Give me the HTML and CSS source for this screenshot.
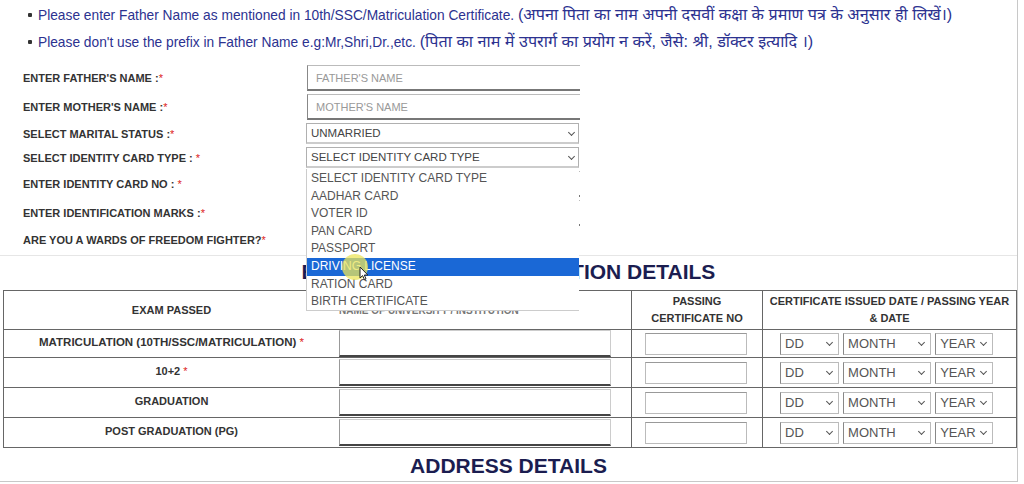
FILE: index.html
```html
<!DOCTYPE html>
<html lang="en">
<head>
  <meta charset="UTF-8">
  <title>Personal Details</title>
  <link rel="stylesheet" href="styles.css">
</head>
<body>
  <div class="page">
    <ul class="notes">
      <li><span>Please enter Father Name as mentioned in 10th/SSC/Matriculation Certificate. <span class="hi">(अपना पिता का नाम अपनी दसवीं कक्षा के प्रमाण पत्र के अनुसार ही लिखें।)</span></span></li>
      <li><span>Please don't use the prefix in Father Name e.g:Mr,Shri,Dr.,etc. <span class="hi">(पिता का नाम में उपरार्ग का प्रयोग न करें, जैसे: श्री, डॉक्टर इत्यादि ।)</span></span></li>
    </ul>

    <div class="form">
      <label class="lbl">ENTER FATHER'S NAME :<span class="req">*</span></label>
      <input class="txt" type="text" placeholder="FATHER'S NAME">

      <label class="lbl">ENTER MOTHER'S NAME :<span class="req">*</span></label>
      <input class="txt" type="text" placeholder="MOTHER'S NAME">

      <label class="lbl">SELECT MARITAL STATUS :<span class="req">*</span></label>
      <span class="sel wide"><select><option>UNMARRIED</option></select></span>

      <label class="lbl">SELECT IDENTITY CARD TYPE : <span class="req">*</span></label>
      <span class="sel wide"><select><option>SELECT IDENTITY CARD TYPE</option></select></span>

      <label class="lbl">ENTER IDENTITY CARD NO : <span class="req">*</span></label>
      <input class="txt" type="text" placeholder="IDENTITY CARD NO">

      <label class="lbl">ENTER IDENTIFICATION MARKS :<span class="req">*</span></label>
      <input class="txt" type="text" placeholder="IDENTIFICATION MARKS">

      <label class="lbl">ARE YOU A WARDS OF FREEDOM FIGHTER?<span class="req">*</span></label>
      <span class="sel wide"><select><option>NO</option></select></span>
    </div>

    <div class="dropdown">
      <div class="opt">SELECT IDENTITY CARD TYPE</div>
      <div class="opt">AADHAR CARD</div>
      <div class="opt">VOTER ID</div>
      <div class="opt">PAN CARD</div>
      <div class="opt">PASSPORT</div>
      <div class="opt active">DRIVING LICENSE</div>
      <div class="opt">RATION CARD</div>
      <div class="opt">BIRTH CERTIFICATE</div>
    </div>

    <div class="cursor">
      <span class="halo"></span>
      <svg class="arrow" width="10" height="15" viewBox="0 0 10 15">
        <path d="M1 1 L1 12 L3.6 9.6 L5.4 13.6 L7 12.9 L5.3 9 L8.8 9 Z" fill="#fff" stroke="#222" stroke-width="1"/>
      </svg>
    </div>

    <h2 class="section edu-title">EDUCATIONAL QUALIFICATION DETAILS</h2>

    <table class="edu">
      <tr class="head">
        <th class="c1">EXAM PASSED</th>
        <th class="c2">NAME OF UNIVERSITY / INSTITUTION</th>
        <th class="c3">PASSING<br>CERTIFICATE NO</th>
        <th class="c4">CERTIFICATE ISSUED DATE / PASSING YEAR<br>&amp; DATE</th>
      </tr>
      <tr class="first">
        <td class="c1">MATRICULATION (10TH/SSC/MATRICULATION) <span class="req">*</span></td>
        <td class="c2"><input class="uni" type="text"></td>
        <td class="c3"><input class="cert" type="text"></td>
        <td class="c4">
          <span class="sel dd"><select><option>DD</option></select></span>
          <span class="sel mm"><select><option>MONTH</option></select></span>
          <span class="sel yy"><select><option>YEAR</option></select></span>
        </td>
      </tr>
      <tr>
        <td class="c1">10+2 <span class="req">*</span></td>
        <td class="c2"><input class="uni" type="text"></td>
        <td class="c3"><input class="cert" type="text"></td>
        <td class="c4">
          <span class="sel dd"><select><option>DD</option></select></span>
          <span class="sel mm"><select><option>MONTH</option></select></span>
          <span class="sel yy"><select><option>YEAR</option></select></span>
        </td>
      </tr>
      <tr>
        <td class="c1">GRADUATION</td>
        <td class="c2"><input class="uni" type="text"></td>
        <td class="c3"><input class="cert" type="text"></td>
        <td class="c4">
          <span class="sel dd"><select><option>DD</option></select></span>
          <span class="sel mm"><select><option>MONTH</option></select></span>
          <span class="sel yy"><select><option>YEAR</option></select></span>
        </td>
      </tr>
      <tr>
        <td class="c1">POST GRADUATION (PG)</td>
        <td class="c2"><input class="uni" type="text"></td>
        <td class="c3"><input class="cert" type="text"></td>
        <td class="c4">
          <span class="sel dd"><select><option>DD</option></select></span>
          <span class="sel mm"><select><option>MONTH</option></select></span>
          <span class="sel yy"><select><option>YEAR</option></select></span>
        </td>
      </tr>
    </table>

    <h2 class="section address">ADDRESS DETAILS</h2>
  </div>
</body>
</html>
```

FILE: styles.css
```css
body {
  margin: 0;
  background: #fff;
  font-family: "Liberation Sans", Arial, "Noto Sans Devanagari", sans-serif;
  color: #333;
}
.page {
  position: relative;
  width: 1017px;
  height: 481px;
  border-right: 1px solid #c8c8c8;
  border-bottom: 1px solid #c8c8c8;
  overflow: hidden;
}

/* notes */
.notes {
  list-style: none;
  margin: 0;
  padding: 5px 0 0 28px;
  color: #2c3290;
  font-size: 13.75px;
  line-height: 18px;
}
.notes li {
  display: flex;
  gap: 6px;
  height: 18px;
  margin-bottom: 9px;
  white-space: nowrap;
}
.notes li::before {
  content: "";
  width: 4px;
  height: 4px;
  margin-top: 8px;
  background: #333;
  border-radius: 1px;
  flex: none;
}
.notes .hi {
  font-size: 16.2px;
  line-height: 18px;
}

/* personal form */
.form {
  display: grid;
  grid-template-columns: 284px 273px;
  row-gap: 3px;
  align-items: center;
  margin: 15px 0 0 23px;
}
.lbl {
  font-size: 11px;
  font-weight: bold;
  color: #333;
}
.req {
  color: #d22;
  font-weight: normal;
}
.txt {
  box-sizing: border-box;
  height: 26px;
  width: 273px;
  margin: 0;
  padding: 0 8px;
  border: 1px solid #bbb;
  border-left-color: #888;
  border-bottom: 2px solid #777;
  border-right: none;
  font: 11px "Liberation Sans", Arial, sans-serif;
  color: #333;
}
.txt::placeholder {
  color: #999;
}
.sel {
  position: relative;
  display: inline-block;
}
.sel select {
  appearance: none;
  -webkit-appearance: none;
  box-sizing: border-box;
  width: 100%;
  height: 100%;
  margin: 0;
  padding: 0 0 0 4px;
  border: 1px solid #aaa;
  border-radius: 0;
  background: #fff;
  font: 12px "Liberation Sans", Arial, sans-serif;
  color: #444;
}
.sel::after {
  content: "";
  position: absolute;
  right: 8px;
  top: 50%;
  width: 4px;
  height: 4px;
  margin-top: -4px;
  border-right: 1px solid #555;
  border-bottom: 1px solid #555;
  transform: rotate(45deg);
  pointer-events: none;
}
.sel.wide {
  width: 273px;
  height: 21px;
  margin-left: -1px;
}
.sel.wide::after {
  right: 5px;
}
.sel.wide select {
  font-size: 11.5px;
  border-color: #b0b0b0;
  border-bottom: 2px solid #ccc;
}

/* open list of the identity card select */
.dropdown {
  position: absolute;
  left: 306px;
  top: 169px;
  width: 272px;
  height: 141px;
  background: #fff;
  border-left: 1px solid #ccc;
  border-bottom: 1px solid #ccc;
  z-index: 2;
}
.opt {
  height: 17.6px;
  line-height: 17.6px;
  padding-left: 4px;
  font-size: 12px;
  color: #555;
}
.opt:first-child {
  margin-top: 1px;
}
.opt.active {
  background: #1a68d6;
  color: #fff;
}
.cursor {
  position: absolute;
  left: 342px;
  top: 254px;
  width: 26px;
  height: 26px;
  z-index: 3;
}
.halo {
  position: absolute;
  inset: 0;
  border-radius: 50%;
  background: rgba(235, 228, 90, 0.75);
}
.arrow {
  position: absolute;
  left: 17px;
  top: 12px;
}

/* sections */
.section {
  margin: 0;
  text-align: center;
  font-size: 21px;
  line-height: 24px;
  color: #1b1d50;
}
.edu-title {
  border-top: 1px solid #e6e6e6;
  margin-top: 5px;
  padding-top: 4px;
}
.address {
  margin-top: 6px;
}

/* education table */
.edu {
  margin: 6px 0 0 3px;
  width: 1010px;
  border-collapse: collapse;
  border: 1px solid #666;
  table-layout: fixed;
}
.edu th, .edu td {
  border: 1px solid #666;
  font-size: 11px;
  font-weight: bold;
  color: #333;
  text-align: center;
  padding: 0;
}
.edu th {
  height: 38px;
  line-height: 17px;
}
.edu th.c2 {
  color: #777;
  font-size: 10px;
}
.edu .c1 { width: 335px; border-right: none; }
.edu .c2 { width: 292px; border-left: none; text-align: left; }
.edu .c3 { width: 130px; }
.edu .c4 { width: 253px; }
.edu td.c3, .edu td.c4 {
  text-align: left;
}
.edu td {
  height: 29px;
  vertical-align: middle;
}
.edu tr.first td {
  height: 27px;
}
.edu td.c1 {
  vertical-align: top;
  padding-top: 7px;
  box-sizing: border-box;
}
.edu tr.first td.c1 {
  padding-top: 6px;
  font-size: 11.5px;
}
.uni {
  display: block;
  box-sizing: border-box;
  width: 272px;
  height: 27px;
  margin: 0;
  border: 1px solid #ccc;
  border-left-color: #999;
  border-bottom: 2px solid #444;
}
.cert {
  box-sizing: border-box;
  width: 102px;
  height: 22px;
  margin: 0 0 0 13px;
  border: 1px solid #bbb;
  border-top-color: #999;
  vertical-align: middle;
}
.c4 .sel {
  height: 22px;
  vertical-align: middle;
}
.c4 .sel::after {
  right: 7px;
}
.c4 .sel select {
  font-size: 13px;
  color: #555;
  border-color: #bbb;
  border-left-color: #888;
}
.dd { width: 59px; margin-left: 17px; }
.mm { width: 88px; margin-left: 1px; }
.yy { width: 58px; margin-left: 1px; }
```
